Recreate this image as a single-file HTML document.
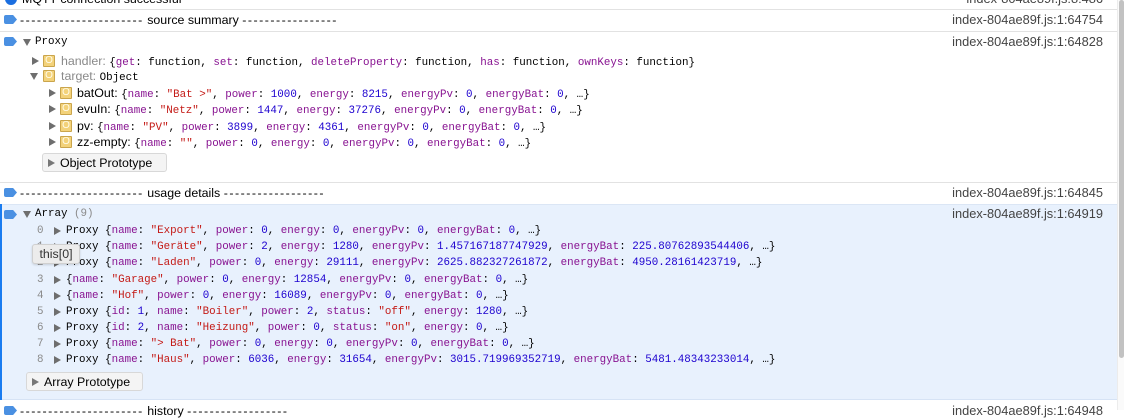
<!DOCTYPE html>
<html><head><meta charset="utf-8"><style>
*{margin:0;padding:0;box-sizing:border-box}
body{width:1124px;height:410px;overflow:hidden;background:#fff;position:relative;font-family:"Liberation Sans",sans-serif;font-size:11px;color:#000}
.l{position:absolute;white-space:pre;line-height:14px;height:14px}
.m{font-family:"Liberation Mono",monospace;font-size:10.85px}
.s{font-family:"Liberation Sans",sans-serif;font-size:12.4px}
.k{color:#881391}.st{color:#c41a16}.n{color:#1c00cf}.g{color:#8a8a8a}
.d{letter-spacing:1.5px}
.r{position:absolute;right:21px;color:#444;font-size:12.8px;line-height:14px;white-space:pre}
.hr{position:absolute;left:0;width:1117px;height:1px;background:#e2e2e2}
.tag{position:absolute;left:4px;width:13px;height:9px;background:#4a90e2;border-radius:2px 0 0 2px;clip-path:polygon(0 0,70% 0,100% 50%,70% 100%,0 100%)}
.tri{position:absolute;width:0;height:0}
.tr{border-left:7px solid #6e6e6e;border-top:4px solid transparent;border-bottom:4px solid transparent}
.td{border-top:7px solid #6e6e6e;border-left:4px solid transparent;border-right:4px solid transparent}
.b{position:absolute;width:12px;height:12px;background:#f3d27a;border:1px solid #caa54c;border-radius:1px;color:#fffbe8;font-size:10px;line-height:10px;text-align:center;font-family:"Liberation Sans",sans-serif}
.btn{position:absolute;border:1px solid #d8d8d8;background:#f4f4f4;border-radius:3px;font-size:12.4px;line-height:18px;padding-left:17px;white-space:pre}
.btn:before{content:"";position:absolute;left:5px;top:5px;border-left:7px solid #777;border-top:4px solid transparent;border-bottom:4px solid transparent}
</style></head><body>
<div style="position:absolute;left:5px;top:-7px;width:12px;height:12px;border-radius:50%;background:#1a6ee0"></div>
<div class="l s" style="left:22px;top:-8px">MQTT connection successful</div>
<div class="r" style="top:-8px">index-804ae89f.js:8:486</div>
<div class="hr" style="top:9px"></div>
<div class="tag" style="top:15px"></div>
<div class="l s" style="left:20px;top:13px"><span class="d">----------------------</span> source summary <span class="d">-----------------</span></div>
<div class="r" style="top:13px">index-804ae89f.js:1:64754</div>
<div class="hr" style="top:31px"></div>
<div class="tag" style="top:37px"></div>
<div class="tri td" style="left:23px;top:39px"></div>
<div class="l m" style="left:35px;top:35px">Proxy</div>
<div class="r" style="top:35px">index-804ae89f.js:1:64828</div>
<div class="tri tr" style="left:32px;top:57px"></div>
<div class="b" style="left:43px;top:55px">O</div>
<div class="l m" style="left:61px;top:54px"><span class="s g">handler: </span>{<span class="k">get</span>: function, <span class="k">set</span>: function, <span class="k">deleteProperty</span>: function, <span class="k">has</span>: function, <span class="k">ownKeys</span>: function}</div>
<div class="tri td" style="left:30px;top:73px"></div>
<div class="b" style="left:43px;top:70px">O</div>
<div class="l m" style="left:61px;top:69px"><span class="s g">target: </span>Object</div>
<div class="tri tr" style="left:49px;top:89px"></div>
<div class="b" style="left:60px;top:87px">O</div>
<div class="l m" style="left:77px;top:86px"><span class="s">batOut: </span>{<span class="k">name</span>: <span class="st">"Bat &gt;"</span>, <span class="k">power</span>: <span class="n">1000</span>, <span class="k">energy</span>: <span class="n">8215</span>, <span class="k">energyPv</span>: <span class="n">0</span>, <span class="k">energyBat</span>: <span class="n">0</span>, …}</div>
<div class="tri tr" style="left:49px;top:105px"></div>
<div class="b" style="left:60px;top:103px">O</div>
<div class="l m" style="left:77px;top:102px"><span class="s">evuIn: </span>{<span class="k">name</span>: <span class="st">"Netz"</span>, <span class="k">power</span>: <span class="n">1447</span>, <span class="k">energy</span>: <span class="n">37276</span>, <span class="k">energyPv</span>: <span class="n">0</span>, <span class="k">energyBat</span>: <span class="n">0</span>, …}</div>
<div class="tri tr" style="left:49px;top:122px"></div>
<div class="b" style="left:60px;top:120px">O</div>
<div class="l m" style="left:77px;top:119px"><span class="s">pv: </span>{<span class="k">name</span>: <span class="st">"PV"</span>, <span class="k">power</span>: <span class="n">3899</span>, <span class="k">energy</span>: <span class="n">4361</span>, <span class="k">energyPv</span>: <span class="n">0</span>, <span class="k">energyBat</span>: <span class="n">0</span>, …}</div>
<div class="tri tr" style="left:49px;top:138px"></div>
<div class="b" style="left:60px;top:136px">O</div>
<div class="l m" style="left:77px;top:135px"><span class="s">zz-empty: </span>{<span class="k">name</span>: <span class="st">""</span>, <span class="k">power</span>: <span class="n">0</span>, <span class="k">energy</span>: <span class="n">0</span>, <span class="k">energyPv</span>: <span class="n">0</span>, <span class="k">energyBat</span>: <span class="n">0</span>, …}</div>
<div class="btn" style="left:42px;top:153px;width:125px;height:19px">Object Prototype</div>
<div class="hr" style="top:182px"></div>
<div class="tag" style="top:188px"></div>
<div class="l s" style="left:20px;top:186px"><span class="d">----------------------</span> usage details <span class="d">------------------</span></div>
<div class="r" style="top:186px">index-804ae89f.js:1:64845</div>
<div style="position:absolute;left:0;top:204px;width:1117px;height:196px;background:#e8f1fd;border-top:1px solid #dbe6f5;border-bottom:1px solid #d6e3f5"></div>
<div style="position:absolute;left:0;top:204px;width:2px;height:196px;background:#1a7cf0"></div>
<div class="tag" style="top:210px"></div>
<div class="tri td" style="left:23px;top:211px"></div>
<div class="l m" style="left:35px;top:207px">Array <span class="g">(9)</span></div>
<div class="r" style="top:207px">index-804ae89f.js:1:64919</div>
<div class="l m g" style="left:37px;top:224px">0</div><div class="tri tr" style="left:54px;top:227px"></div>
<div class="l m" style="left:66px;top:224px">Proxy {<span class="k">name</span>: <span class="st">"Export"</span>, <span class="k">power</span>: <span class="n">0</span>, <span class="k">energy</span>: <span class="n">0</span>, <span class="k">energyPv</span>: <span class="n">0</span>, <span class="k">energyBat</span>: <span class="n">0</span>, …}</div>
<div class="l m g" style="left:37px;top:240px">1</div><div class="tri tr" style="left:54px;top:243px"></div>
<div class="l m" style="left:66px;top:240px">Proxy {<span class="k">name</span>: <span class="st">"Geräte"</span>, <span class="k">power</span>: <span class="n">2</span>, <span class="k">energy</span>: <span class="n">1280</span>, <span class="k">energyPv</span>: <span class="n">1.457167187747929</span>, <span class="k">energyBat</span>: <span class="n">225.80762893544406</span>, …}</div>
<div class="l m g" style="left:37px;top:256px">2</div><div class="tri tr" style="left:54px;top:259px"></div>
<div class="l m" style="left:66px;top:256px">Proxy {<span class="k">name</span>: <span class="st">"Laden"</span>, <span class="k">power</span>: <span class="n">0</span>, <span class="k">energy</span>: <span class="n">29111</span>, <span class="k">energyPv</span>: <span class="n">2625.882327261872</span>, <span class="k">energyBat</span>: <span class="n">4950.28161423719</span>, …}</div>
<div class="l m g" style="left:37px;top:273px">3</div><div class="tri tr" style="left:54px;top:276px"></div>
<div class="l m" style="left:66px;top:273px">{<span class="k">name</span>: <span class="st">"Garage"</span>, <span class="k">power</span>: <span class="n">0</span>, <span class="k">energy</span>: <span class="n">12854</span>, <span class="k">energyPv</span>: <span class="n">0</span>, <span class="k">energyBat</span>: <span class="n">0</span>, …}</div>
<div class="l m g" style="left:37px;top:289px">4</div><div class="tri tr" style="left:54px;top:292px"></div>
<div class="l m" style="left:66px;top:289px">{<span class="k">name</span>: <span class="st">"Hof"</span>, <span class="k">power</span>: <span class="n">0</span>, <span class="k">energy</span>: <span class="n">16089</span>, <span class="k">energyPv</span>: <span class="n">0</span>, <span class="k">energyBat</span>: <span class="n">0</span>, …}</div>
<div class="l m g" style="left:37px;top:305px">5</div><div class="tri tr" style="left:54px;top:308px"></div>
<div class="l m" style="left:66px;top:305px">Proxy {<span class="k">id</span>: <span class="n">1</span>, <span class="k">name</span>: <span class="st">"Boiler"</span>, <span class="k">power</span>: <span class="n">2</span>, <span class="k">status</span>: <span class="st">"off"</span>, <span class="k">energy</span>: <span class="n">1280</span>, …}</div>
<div class="l m g" style="left:37px;top:321px">6</div><div class="tri tr" style="left:54px;top:324px"></div>
<div class="l m" style="left:66px;top:321px">Proxy {<span class="k">id</span>: <span class="n">2</span>, <span class="k">name</span>: <span class="st">"Heizung"</span>, <span class="k">power</span>: <span class="n">0</span>, <span class="k">status</span>: <span class="st">"on"</span>, <span class="k">energy</span>: <span class="n">0</span>, …}</div>
<div class="l m g" style="left:37px;top:337px">7</div><div class="tri tr" style="left:54px;top:340px"></div>
<div class="l m" style="left:66px;top:337px">Proxy {<span class="k">name</span>: <span class="st">"&gt; Bat"</span>, <span class="k">power</span>: <span class="n">0</span>, <span class="k">energy</span>: <span class="n">0</span>, <span class="k">energyPv</span>: <span class="n">0</span>, <span class="k">energyBat</span>: <span class="n">0</span>, …}</div>
<div class="l m g" style="left:37px;top:353px">8</div><div class="tri tr" style="left:54px;top:356px"></div>
<div class="l m" style="left:66px;top:353px">Proxy {<span class="k">name</span>: <span class="st">"Haus"</span>, <span class="k">power</span>: <span class="n">6036</span>, <span class="k">energy</span>: <span class="n">31654</span>, <span class="k">energyPv</span>: <span class="n">3015.719969352719</span>, <span class="k">energyBat</span>: <span class="n">5481.48343233014</span>, …}</div>
<div class="btn" style="left:26px;top:372px;width:117px;height:19px">Array Prototype</div>
<div style="position:absolute;left:32px;top:244px;width:48px;height:20px;background:#ececec;border:1px solid #d0d0d0;border-radius:3px;box-shadow:0 1px 2px rgba(0,0,0,.15);font-size:12.4px;line-height:18px;text-align:center;color:#333">this[0]</div>
<div class="tag" style="top:406px"></div>
<div class="l s" style="left:20px;top:404px"><span class="d">----------------------</span> history <span class="d">------------------</span></div>
<div class="r" style="top:404px">index-804ae89f.js:1:64948</div>
<div style="position:absolute;left:1117px;top:0;width:7px;height:410px;background:#fafafa;border-left:1px solid #ececec"></div>
<div style="position:absolute;left:1119px;top:0;width:5px;height:358px;background:#c2c2c2;border-radius:3px"></div>
</body></html>
